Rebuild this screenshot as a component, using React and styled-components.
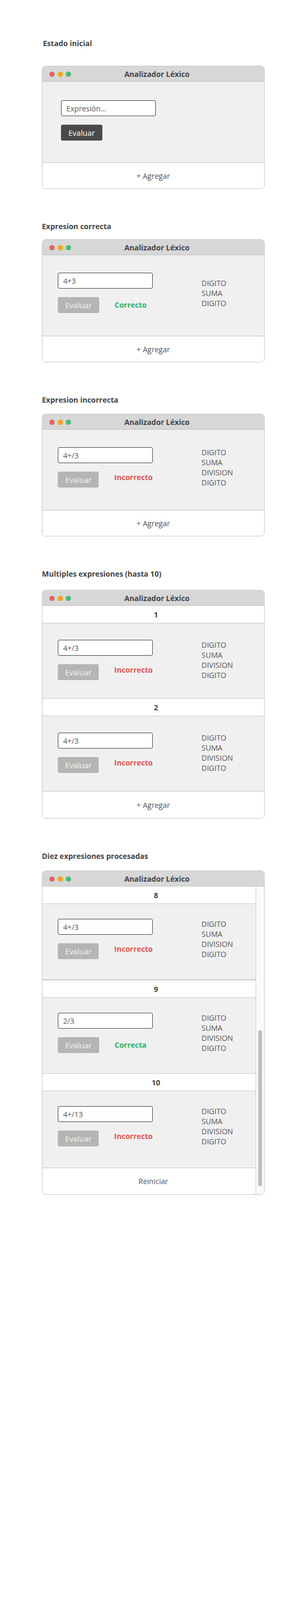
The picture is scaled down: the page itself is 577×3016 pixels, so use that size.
import React from "react";
import styled, { createGlobalStyle } from "styled-components";

const GlobalStyle = createGlobalStyle`
  * { box-sizing: border-box; }
  body {
    margin: 0;
    background: #ffffff;
    font-family: "Open Sans", "Noto Sans", sans-serif;
    color: #444;
  }
`;

const tokensOk = ["DIGITO", "SUMA", "DIGITO"];
const tokensBad = ["DIGITO", "SUMA", "DIVISION", "DIGITO"];

const correct = { value: "4+3", status: "Correcto", ok: true, tokens: tokensOk };
const wrong = { value: "4+/3", status: "Incorrecto", ok: false, tokens: tokensBad };

const lastThree = [
  { n: 8, value: "4+/3", status: "Incorrecto", ok: false, tokens: tokensBad },
  { n: 9, value: "2/3", status: "Correcta", ok: true, tokens: tokensBad },
  { n: 10, value: "4+/13", status: "Incorrecto", ok: false, tokens: tokensBad },
];

export default function App() {
  return (
    <Page>
      <GlobalStyle />

      <Section>
        <Heading $space={32} $indent={2}>Estado inicial</Heading>
        <Window>
          <TitleBar />
          <Body $h={152} $top={35} $left={35}>
            <LeftCol>
              <Input placeholder="Expresión..." readOnly />
              <ButtonRow>
                <EvalButton $active>Evaluar</EvalButton>
              </ButtonRow>
            </LeftCol>
          </Body>
          <Footer>+ Agregar</Footer>
        </Window>
      </Section>

      <Section>
        <Heading $space={14}>Expresion correcta</Heading>
        <Window>
          <TitleBar />
          <Body $h={152} $top={33}>
            <Entry item={correct} />
          </Body>
          <Footer>+ Agregar</Footer>
        </Window>
      </Section>

      <Section>
        <Heading $space={16}>Expresion incorrecta</Heading>
        <Window>
          <TitleBar />
          <Body $h={151} $top={33}>
            <Entry item={wrong} />
          </Body>
          <Footer>+ Agregar</Footer>
        </Window>
      </Section>

      <Section>
        <Heading $space={20}>Multiples expresiones (hasta 10)</Heading>
        <Window>
          <TitleBar />
          <SectionHeader>1</SectionHeader>
          <Body $h={142} $top={31} $divider>
            <Entry item={wrong} />
          </Body>
          <SectionHeader>2</SectionHeader>
          <Body $h={141} $top={31}>
            <Entry item={wrong} />
          </Body>
          <Footer $h={51}>+ Agregar</Footer>
        </Window>
      </Section>

      <Section>
        <Heading $space={17}>Diez expresiones procesadas</Heading>
        <Window>
          <TitleBar />
          <ScrollArea>
            <ScrollContent>
              {lastThree.map((item, i) => (
                <React.Fragment key={item.n}>
                  <SectionHeader $shift={26}>{item.n}</SectionHeader>
                  <Body $h={i === 1 ? 143 : 144} $top={28} $divider={i < 2} $thick={i === 0}>
                    <Entry item={item} />
                  </Body>
                </React.Fragment>
              ))}
              <Footer $h={50} $shift={16}>Reiniciar</Footer>
            </ScrollContent>
            <Track>
              <Thumb />
            </Track>
          </ScrollArea>
        </Window>
      </Section>
    </Page>
  );
}

function TitleBar() {
  return (
    <Bar>
      <Dots>
        <Dot $c="#dd6666" />
        <Dot $c="#f2a427" />
        <Dot $c="#4cbd6b" />
      </Dots>
      <BarTitle>Analizador Léxico</BarTitle>
    </Bar>
  );
}

function Entry({ item }) {
  return (
    <Row>
      <LeftCol>
        <Input value={item.value} readOnly />
        <ButtonRow>
          <EvalButton>Evaluar</EvalButton>
          <Status $ok={item.ok}>{item.status}</Status>
        </ButtonRow>
      </LeftCol>
      <Tokens>
        {item.tokens.map((t, i) => (
          <div key={i}>{t}</div>
        ))}
      </Tokens>
    </Row>
  );
}

const Page = styled.div`
  padding: 72px 0 0 79px;
  min-height: 3016px;
`;

const Section = styled.section`
  width: 420px;
  margin-bottom: 61px;
`;

const Heading = styled.h2`
  margin: 0 0 ${(p) => p.$space}px;
  padding-left: ${(p) => p.$indent || 0}px;
  font-size: 14px;
  line-height: 20px;
  font-weight: 700;
  color: #444;
`;

const Window = styled.div`
  border: 1px solid #c6c6c6;
  border-radius: 7px;
  overflow: hidden;
  background: #fff;
`;

const Bar = styled.div`
  height: 29px;
  display: flex;
  align-items: center;
  padding-left: 13px;
  background: #d7d7d7;
  border-bottom: 1px solid #c2c2c2;
`;

const Dots = styled.div`
  display: flex;
  gap: 5.5px;
  margin-top: 2px;
`;

const Dot = styled.span`
  width: 10px;
  height: 10px;
  border-radius: 50%;
  background: ${(p) => p.$c};
`;

const BarTitle = styled.div`
  flex: 1;
  text-align: center;
  padding-right: 40px;
  font-size: 14px;
  font-weight: 700;
  color: #444;
`;

const Body = styled.div`
  height: ${(p) => p.$h}px;
  padding: ${(p) => p.$top}px 0 0 ${(p) => p.$left || 29}px;
  background: #f0f0f0;
  border-bottom: ${(p) => (p.$divider ? (p.$thick ? "2px" : "1px") : "0")} solid #cccccc;
`;

const Row = styled.div`
  display: flex;
  align-items: center;
`;

const LeftCol = styled.div`
  display: flex;
  flex-direction: column;
  gap: 16px;
  width: 179px;
`;

const Input = styled.input`
  width: 179px;
  height: 30px;
  border: 1px solid #444;
  border-radius: 3px;
  background: #fff;
  padding: 0 9px;
  font-family: inherit;
  font-size: 14px;
  color: #555;
  outline: none;
  &::placeholder { color: #555; }
`;

const ButtonRow = styled.div`
  display: flex;
  align-items: center;
`;

const EvalButton = styled.button`
  width: 78px;
  height: 30px;
  border: none;
  border-radius: 3px;
  background: ${(p) => (p.$active ? "#4a4a4a" : "#b5b5b5")};
  color: ${(p) => (p.$active ? "#ffffff" : "#f2f2f2")};
  font-family: inherit;
  font-size: 14.5px;
  padding: 0;
`;

const Status = styled.span`
  margin-left: 29px;
  margin-top: ${(p) => (p.$ok ? "-2px" : "-9px")};
  font-size: 14px;
  font-weight: 700;
  white-space: nowrap;
  color: ${(p) => (p.$ok ? "#2bb46a" : "#e0524f")};
`;

const Tokens = styled.div`
  margin-left: 92px;
  font-size: 14px;
  line-height: 19px;
  color: #555;
`;

const SectionHeader = styled.div`
  height: 33px;
  display: flex;
  align-items: center;
  justify-content: center;
  padding-left: ${(p) => p.$shift || 10}px;
  background: #fff;
  border-bottom: 1px solid #cccccc;
  font-size: 14px;
  font-weight: 700;
  color: #444;
`;

const Footer = styled.div`
  height: ${(p) => p.$h || 49}px;
  display: flex;
  align-items: center;
  justify-content: center;
  padding-left: ${(p) => p.$shift || 0}px;
  background: #fff;
  border-top: 1px solid #c8c8c8;
  font-size: 14px;
  color: #555;
`;

const ScrollArea = styled.div`
  display: flex;
`;

const ScrollContent = styled.div`
  flex: 1;
`;

const Track = styled.div`
  width: 16px;
  display: flex;
  flex-direction: column;
  justify-content: flex-end;
  align-items: center;
  padding-bottom: 15px;
  background: #fafafa;
  border-left: 1px solid #cccccc;
`;

const Thumb = styled.div`
  width: 7px;
  height: 294px;
  border-radius: 4px;
  background: #bdbdbd;
`;
